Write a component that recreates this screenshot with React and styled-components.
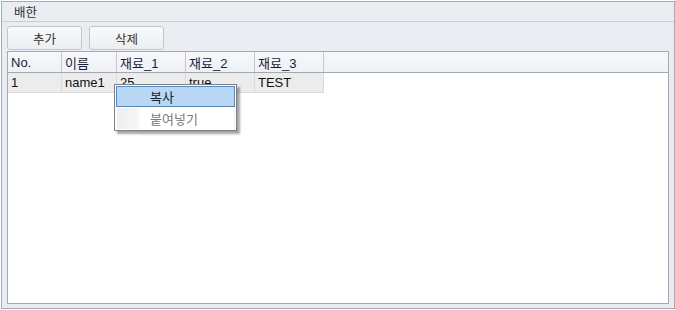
import React from "react";
import styled, { createGlobalStyle } from "styled-components";

const GlobalStyle = createGlobalStyle`
  html, body {
    margin: 0;
    padding: 0;
    background: #ffffff;
  }
  body {
    font-family: "Liberation Sans", "Noto Sans CJK KR", sans-serif;
    font-size: 13px;
  }
`;

const Panel = styled.div`
  box-sizing: border-box;
  margin: 1px 0 0 1px;
  width: 674px;
  height: 308px;
  border: 1px solid #a7abb4;
  background: #e9ecf0;
  display: flex;
  flex-direction: column;
`;

const TitleBar = styled.div`
  height: 19px;
  border-bottom: 1px solid #c9cdd4;
  padding-left: 12px;
  display: flex;
  align-items: center;
  color: #333;
  font-size: 12.5px;
`;

const Toolbar = styled.div`
  display: flex;
  gap: 7px;
  padding: 4px 0 0 5px;
  height: 24px;
`;

const Button = styled.button`
  box-sizing: border-box;
  width: 75px;
  height: 24px;
  border: 1px solid #c3c6cc;
  border-radius: 3px;
  background: linear-gradient(#f9fafb, #eceef1);
  font-family: "Liberation Sans", "Noto Sans CJK KR", sans-serif;
  font-size: 12.5px;
  color: #333;
  padding: 0;
`;

const Grid = styled.div`
  position: relative;
  box-sizing: border-box;
  margin: 1px 0 0 5px;
  width: 662px;
  height: 253px;
  border: 1px solid #a3a8b2;
  background: #fff;
`;

const HeaderRow = styled.div`
  display: flex;
  height: 20px;
  border-bottom: 1px solid #a3a8b2;
  background: linear-gradient(#f7f8fa, #eef1f5);
`;

const HeaderCell = styled.div`
  box-sizing: border-box;
  width: ${(p) => p.$w}px;
  border-right: 1px solid #c4c8cf;
  padding-left: 3px;
  display: flex;
  align-items: center;
  color: #1c1c3a;
`;

const DataRow = styled.div`
  display: flex;
  height: 20px;
`;

const DataCell = styled.div`
  box-sizing: border-box;
  width: ${(p) => p.$w}px;
  border-right: 1px solid #dadada;
  border-bottom: 1px solid #dadada;
  background: #ececec;
  padding-left: 3px;
  display: flex;
  align-items: center;
  color: #111;
`;

const Menu = styled.div`
  position: absolute;
  left: 106px;
  top: 32px;
  box-sizing: border-box;
  width: 123px;
  height: 47px;
  border: 1px solid #7f7f7f;
  background: #fff;
  box-shadow: 3px 3px 2px rgba(0, 0, 0, 0.35);
  padding: 1px;
  display: flex;
  flex-direction: column;
`;

const MenuItem = styled.div`
  box-sizing: border-box;
  height: 22px;
  display: flex;
  align-items: center;
  padding-left: 33px;
  border: 1px solid ${(p) => (p.$active ? "#3b8ee0" : "transparent")};
  background: ${(p) =>
    p.$active
      ? "#b7d7f4"
      : "linear-gradient(to right, #efefef 0, #f6f6f6 22px, #fff 23px)"};
  color: ${(p) => (p.$active ? "#222" : "#7a7a7a")};
  & + & {
    margin-top: 1px;
  }
`;

const columns = [
  { key: "no", label: "No.", w: 54 },
  { key: "name", label: "이름", w: 55 },
  { key: "m1", label: "재료_1", w: 69 },
  { key: "m2", label: "재료_2", w: 69 },
  { key: "m3", label: "재료_3", w: 69 },
];

const rows = [{ no: "1", name: "name1", m1: "25", m2: "true", m3: "TEST" }];

export default function App() {
  return (
    <>
      <GlobalStyle />
      <Panel>
        <TitleBar>배한</TitleBar>
        <Toolbar>
          <Button>추가</Button>
          <Button>삭제</Button>
        </Toolbar>
        <Grid>
          <HeaderRow>
            {columns.map((c) => (
              <HeaderCell key={c.key} $w={c.w}>
                {c.label}
              </HeaderCell>
            ))}
          </HeaderRow>
          {rows.map((r, i) => (
            <DataRow key={i}>
              {columns.map((c) => (
                <DataCell key={c.key} $w={c.w}>
                  {r[c.key]}
                </DataCell>
              ))}
            </DataRow>
          ))}
          <Menu>
            <MenuItem $active>복사</MenuItem>
            <MenuItem>붙여넣기</MenuItem>
          </Menu>
        </Grid>
      </Panel>
    </>
  );
}
